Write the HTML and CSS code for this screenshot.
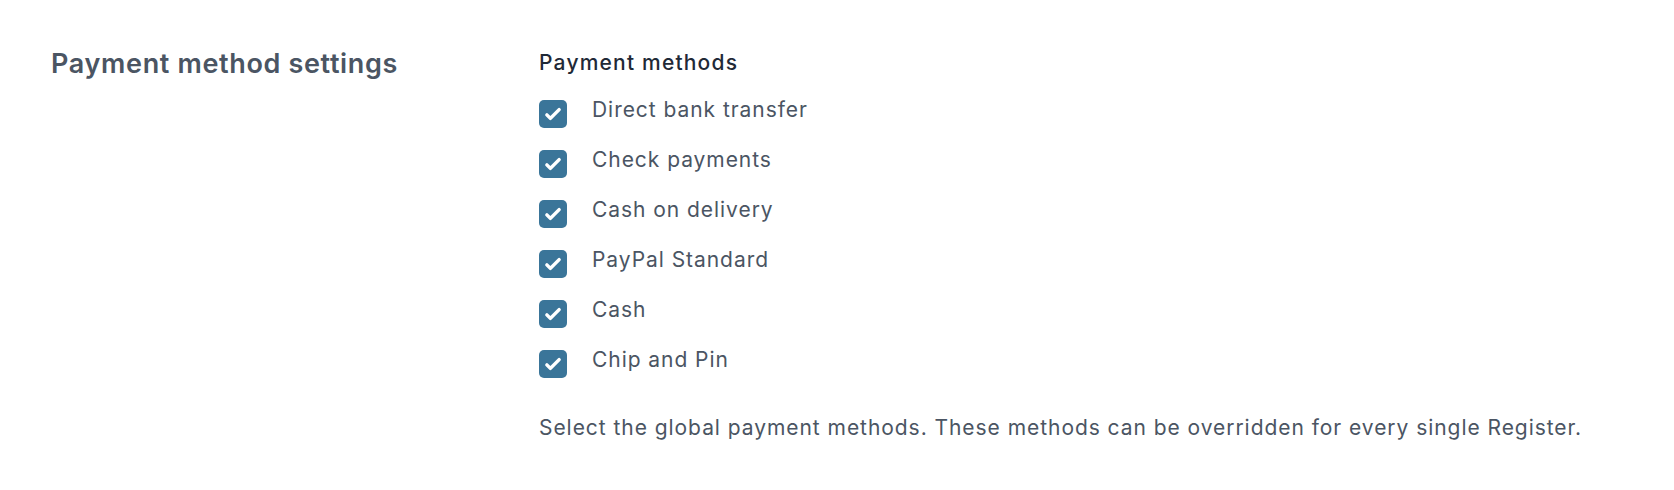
FILE: index.html
```html
<!DOCTYPE html>
<html lang="en">
<head>
  <meta charset="UTF-8">
  <meta name="viewport" content="width=device-width, initial-scale=1.0">
  <title>Payment method settings</title>
  <link rel="stylesheet" href="styles.css">
</head>
<body>
  <div class="settings">
    <h2 class="settings-title">Payment method settings</h2>

    <fieldset class="methods">
      <legend class="methods-label">Payment methods</legend>

      <div class="method-list">
        <label class="method">
          <span class="checkbox"><svg viewBox="0 0 16 16"><path d="M12.207 4.793a1 1 0 010 1.414l-5 5a1 1 0 01-1.414 0l-2-2a1 1 0 011.414-1.414L6.5 9.086l4.293-4.293a1 1 0 011.414 0z"/></svg></span>
          <span class="method-name">Direct bank transfer</span>
        </label>
        <label class="method">
          <span class="checkbox"><svg viewBox="0 0 16 16"><path d="M12.207 4.793a1 1 0 010 1.414l-5 5a1 1 0 01-1.414 0l-2-2a1 1 0 011.414-1.414L6.5 9.086l4.293-4.293a1 1 0 011.414 0z"/></svg></span>
          <span class="method-name">Check payments</span>
        </label>
        <label class="method">
          <span class="checkbox"><svg viewBox="0 0 16 16"><path d="M12.207 4.793a1 1 0 010 1.414l-5 5a1 1 0 01-1.414 0l-2-2a1 1 0 011.414-1.414L6.5 9.086l4.293-4.293a1 1 0 011.414 0z"/></svg></span>
          <span class="method-name">Cash on delivery</span>
        </label>
        <label class="method">
          <span class="checkbox"><svg viewBox="0 0 16 16"><path d="M12.207 4.793a1 1 0 010 1.414l-5 5a1 1 0 01-1.414 0l-2-2a1 1 0 011.414-1.414L6.5 9.086l4.293-4.293a1 1 0 011.414 0z"/></svg></span>
          <span class="method-name">PayPal Standard</span>
        </label>
        <label class="method">
          <span class="checkbox"><svg viewBox="0 0 16 16"><path d="M12.207 4.793a1 1 0 010 1.414l-5 5a1 1 0 01-1.414 0l-2-2a1 1 0 011.414-1.414L6.5 9.086l4.293-4.293a1 1 0 011.414 0z"/></svg></span>
          <span class="method-name">Cash</span>
        </label>
        <label class="method">
          <span class="checkbox"><svg viewBox="0 0 16 16"><path d="M12.207 4.793a1 1 0 010 1.414l-5 5a1 1 0 01-1.414 0l-2-2a1 1 0 011.414-1.414L6.5 9.086l4.293-4.293a1 1 0 011.414 0z"/></svg></span>
          <span class="method-name">Chip and Pin</span>
        </label>
      </div>

      <p class="methods-help">Select the global payment methods. These methods can be overridden for every single Register.</p>
    </fieldset>
  </div>
</body>
</html>
```

FILE: styles.css
```css
body {
  margin: 0;
  font-family: Inter, "Noto Sans", sans-serif;
  background: #fff;
  color: #4b5563;
}
.settings {
  display: grid;
  grid-template-columns: 488px 1fr;
  padding: 48px 0 0 51px;
}
.settings-title {
  margin: 0;
  font-size: 27px;
  line-height: 32px;
  font-weight: 600;
  letter-spacing: 0.65px;
  color: #4b5563;
}
.methods {
  margin: 0;
  padding: 0;
  border: none;
  min-width: 0;
}
.methods-label {
  padding: 0;
  font-size: 21px;
  line-height: 30px;
  font-weight: 500;
  letter-spacing: 1.2px;
  color: #1f2937;
}
.method-list {
  display: flex;
  flex-direction: column;
  gap: 17px;
  margin-top: 17px;
}
.method {
  display: flex;
  align-items: flex-start;
  gap: 25px;
  font-size: 21px;
  line-height: 30px;
  letter-spacing: 0.95px;
  color: #4b5563;
}
.checkbox {
  flex: none;
  width: 28px;
  height: 28px;
  margin-top: 5px;
  border-radius: 5px;
  background: #3a7599;
  display: flex;
  align-items: center;
  justify-content: center;
}
.checkbox svg {
  width: 28px;
  height: 28px;
  fill: #fff;
}
.methods-help {
  margin: 35px 0 0;
  font-size: 21px;
  line-height: 30px;
  letter-spacing: 0.95px;
  color: #4b5563;
}
```
